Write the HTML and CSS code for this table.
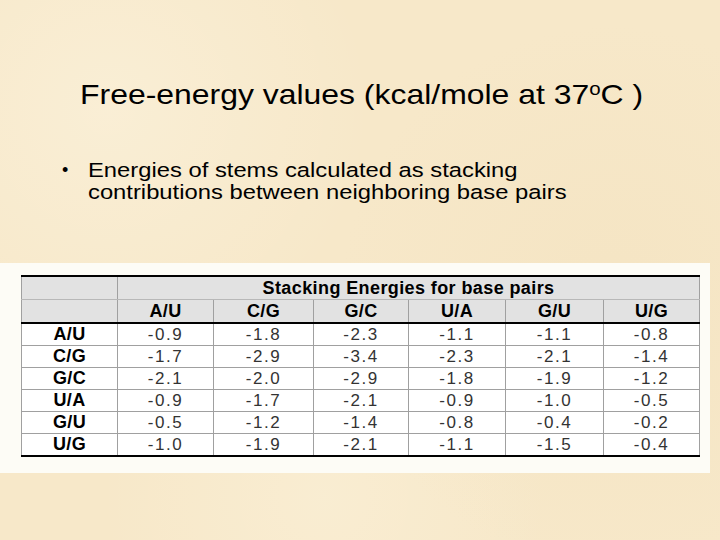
FILE: index.html
```html
<!DOCTYPE html>
<html>
<head>
<meta charset="utf-8">
<link rel="stylesheet" href="styles.css">
</head>
<body>
<div class="slide">
  <h1 class="title"><span class="stretch">Free-energy values (kcal/mole at 37<sup>o</sup>C )</span></h1>
  <ul class="bullets">
    <li><span class="stretch">Energies of stems calculated as stacking<br>contributions between neighboring base pairs</span></li>
  </ul>
  <div class="panel">
    <table class="energy">
      <colgroup>
        <col class="c-first"><col class="c-au"><col class="c-cg"><col class="c-gc"><col class="c-ua"><col class="c-gu"><col class="c-ug">
      </colgroup>
      <thead>
        <tr class="h1">
          <th></th>
          <th colspan="6">Stacking Energies for base pairs</th>
        </tr>
        <tr class="h2">
          <th></th>
          <th>A/U</th><th>C/G</th><th>G/C</th><th>U/A</th><th>G/U</th><th>U/G</th>
        </tr>
      </thead>
      <tbody>
        <tr><th>A/U</th><td>-0.9</td><td>-1.8</td><td>-2.3</td><td>-1.1</td><td>-1.1</td><td>-0.8</td></tr>
        <tr><th>C/G</th><td>-1.7</td><td>-2.9</td><td>-3.4</td><td>-2.3</td><td>-2.1</td><td>-1.4</td></tr>
        <tr><th>G/C</th><td>-2.1</td><td>-2.0</td><td>-2.9</td><td>-1.8</td><td>-1.9</td><td>-1.2</td></tr>
        <tr><th>U/A</th><td>-0.9</td><td>-1.7</td><td>-2.1</td><td>-0.9</td><td>-1.0</td><td>-0.5</td></tr>
        <tr><th>G/U</th><td>-0.5</td><td>-1.2</td><td>-1.4</td><td>-0.8</td><td>-0.4</td><td>-0.2</td></tr>
        <tr><th>U/G</th><td>-1.0</td><td>-1.9</td><td>-2.1</td><td>-1.1</td><td>-1.5</td><td>-0.4</td></tr>
      </tbody>
    </table>
  </div>
</div>
</body>
</html>
```

FILE: styles.css
```css
html, body {
  margin: 0;
  padding: 0;
}
body {
  width: 720px;
  height: 540px;
  overflow: hidden;
  font-family: "Liberation Sans", Arial, sans-serif;
}
.slide {
  width: 720px;
  height: 540px;
  box-sizing: border-box;
  padding-top: 75px;
  background-color: #f7e8c9;
  background-image:
    radial-gradient(circle at 15% 20%, rgba(255,250,236,0.35) 0, rgba(255,250,236,0) 35%),
    radial-gradient(circle at 85% 55%, rgba(238,218,178,0.25) 0, rgba(238,218,178,0) 40%),
    radial-gradient(circle at 45% 92%, rgba(255,248,230,0.3) 0, rgba(255,248,230,0) 35%);
}
.stretch {
  display: inline-block;
  transform-origin: 0 50%;
}
.title {
  margin: 0;
  padding-left: 80px;
  font-size: 28px;
  font-weight: normal;
  line-height: 40px;
  color: #000;
  white-space: nowrap;
}
.title .stretch {
  transform: scaleX(1.14);
}
.title sup {
  font-size: 18px;
  line-height: 0;
  vertical-align: 9px;
}
.bullets {
  margin: 44px 0 0 0;
  padding: 0 0 0 88px;
  list-style: none;
}
.bullets li {
  position: relative;
  font-size: 20.5px;
  line-height: 22px;
  color: #000;
  white-space: nowrap;
}
.bullets li .stretch {
  transform: scaleX(1.16);
}
.bullets li::before {
  content: "\2022";
  position: absolute;
  left: -26px;
  top: 0;
  font-size: 18px;
}
.panel {
  margin-top: 60px;
  width: 710px;
  height: 210px;
  box-sizing: border-box;
  padding: 12px 0 0 21px;
  background: #fdfcf6;
}
.energy {
  border-collapse: collapse;
  table-layout: fixed;
  width: 678px;
  border-left: 1px solid #a0a0a0;
  border-right: 1px solid #a0a0a0;
  border-top: 2px solid #000;
  border-bottom: 2px solid #000;
  background: #fff;
}
.c-first { width: 96px; }
.c-au { width: 96px; }
.c-cg { width: 100px; }
.c-gc { width: 95px; }
.c-ua { width: 97px; }
.c-gu { width: 98px; }
.c-ug { width: 96px; }
.energy th, .energy td {
  padding: 0;
  text-align: center;
  border-left: 1px solid #a0a0a0;
  border-right: 1px solid #a0a0a0;
  color: #000;
}
.energy thead th {
  background: #e2e2e2;
  font-weight: bold;
  font-size: 18px;
  letter-spacing: 0.4px;
}
.energy .h1 th {
  height: 22px;
  border-bottom: 1px solid #b8b8b8;
  line-height: 22px;
}
.energy .h2 th {
  height: 22px;
  line-height: 22px;
  border-bottom: 2px solid #000;
}
.energy tbody th {
  font-weight: bold;
  font-size: 18px;
  letter-spacing: 0.4px;
}
.energy tbody td {
  font-size: 17px;
  letter-spacing: 1.5px;
  color: #333;
}
.energy tbody th, .energy tbody td {
  height: 21px;
  line-height: 21px;
  border-bottom: 1px solid #a0a0a0;
}
```
